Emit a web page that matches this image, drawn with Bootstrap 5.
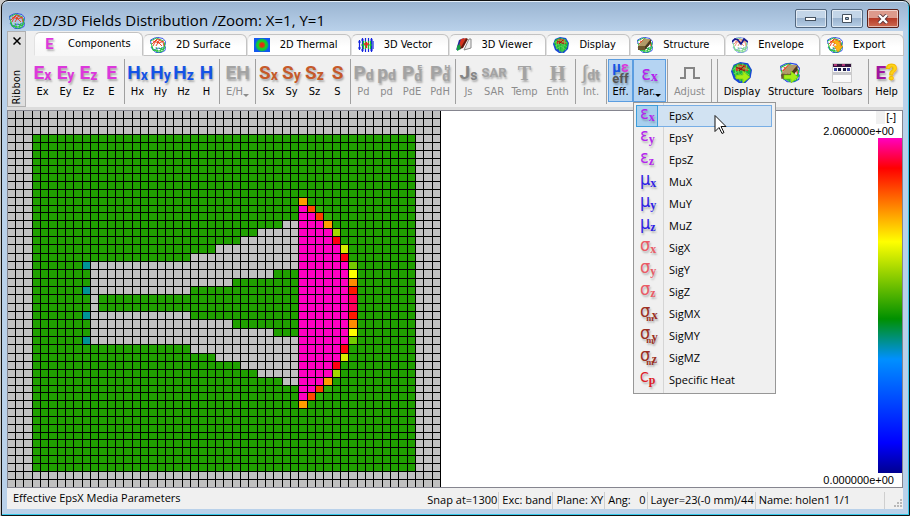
<!DOCTYPE html>
<html lang="en">
<head>
<meta charset="utf-8">
<meta name="viewport" content="width=device-width, initial-scale=1">
<title>2D/3D Fields Distribution</title>
<link rel="stylesheet" href="https://cdn.jsdelivr.net/npm/bootstrap@5.3.0/dist/css/bootstrap.min.css">
<style>
:root{--ui:"DejaVu Sans Condensed","Liberation Sans",sans-serif;--menu:"Open Sans","Noto Sans",sans-serif}
body{background:#c9c9c9;color:#000;font:11px/16px var(--ui)}
button{font:inherit;color:inherit}
.win{min-height:100vh;margin-left:1px;padding:0 6px 6px 5px;border:1px solid #111;border-radius:7px 7px 0 0;background:linear-gradient(#9ab4d1,#b9d1ea 30px);box-shadow:inset -1px -1px 0 #35c8ea,inset 0 1px 0 #e4eef8}
.titlebar{height:30px;padding:8px 4px 0 2px}
.titlebar h1{font:15px/22px var(--menu);margin:0}
.capbtn{width:32px;height:19px;padding:0;border:1px solid #52677f;border-radius:2px;box-shadow:inset 0 0 0 1px rgba(255,255,255,.55);background:linear-gradient(#c3d5e8 45%,#9ab3cf 50%,#b6cee6)}
.capbtn.closer{background:linear-gradient(#dd9a8c 45%,#b63a26 50%,#cc6a52);border-color:#5a2019}
.ribbon{background:#f0f0f0;height:76px}
.side{width:19px;background:#dfdfdf;border:1px solid #b0b0b0;padding:4px 0 1px}
.side button{border:0;background:none;padding:0;height:10px;line-height:8px}
.side span{writing-mode:vertical-rl;transform:rotate(180deg);line-height:14px}
.tabs{padding-left:8px;padding-top:1px;height:25px;flex-wrap:nowrap}
.tabs li{flex:95 1 0;min-width:0;display:flex;align-items:flex-end}
.tabs li.wide{flex-grow:104}.tabs li.mid{flex-grow:98}.tabs li.first{flex-grow:109}.tabs li.slim{flex-grow:84}
.tabs button{width:100%;height:22px;padding:0 0 0 6px;border:1px solid #c3c3c3;border-left-color:#e2e2e2;border-radius:6px 6px 0 0;background:linear-gradient(#f4f4f4,#fff 60%);display:flex;align-items:center;gap:10px;white-space:nowrap;line-height:16px}
.tabs button.active{height:24px;border-bottom-color:#f7f7f7;background:linear-gradient(#fff,#f7f7f7)}
.tabs svg{flex:none}
.tabs .lt{width:17px;font-size:15px;font-style:normal;text-align:center}
.tools{padding:3px 0 0}
.grp{height:45px;border-left:1px solid #a0a0a0;padding:0 1px}
.grp.plain{border-color:transparent;padding-left:4px}
.tool{height:43px;padding:2px 0 0;border:1px solid transparent;background:none;display:flex;flex-direction:column;align-items:center;white-space:nowrap;width:23px}
.tool i{height:22px;display:flex;align-items:center;justify-content:center;font-style:normal}
.tool:disabled{color:#8c8c8c}
.tool.w25{width:25px}.tool.w28{width:28px}.tool.w33{width:33px}.tool.w41{width:41px}.tool.w46{width:46px}.tool.w50{width:50px}.tool.w52{width:52px}
.tool.hot{background:#b5d4f2;border-color:#5b9de0}
.lt{font:bold 19px/20px "Liberation Sans Narrow","Roboto",sans-serif;text-shadow:1px 2px 2px rgba(0,0,0,.3)}
.lt small{font-size:14px;line-height:10px;margin-top:4px}
.lt .pile{display:flex;flex-direction:column;align-items:flex-end;font-size:14px;line-height:11px}
.lt .pile b{font-size:8px;line-height:7px}
.lt.serif{font-family:"Liberation Serif",serif;font-size:20px}
.lt.sar{font-size:13px}
.ce{color:#dc38dc}.ch{color:#1453e6}.cs{color:#c65a2a}.cg{color:#a3a3a3}.cd{color:#858585}
.lt.mixed{font-size:14px;line-height:11px;text-align:center}
.eff{color:#555;font-size:13px}
.help{color:#a014a0}.help b{color:#ffd21a;font-size:22px;-webkit-text-stroke:1px #f1bd00}
.tri{display:inline-block;border:3px solid transparent;border-top-color:currentColor;border-bottom:0;vertical-align:-2px}
.pop{position:absolute;left:0;top:43px;z-index:5;width:143px;margin:0;padding:2px;border:1px solid #979797;background:linear-gradient(90deg,transparent 29px,#d5d5d5 29px,#d5d5d5 30px,transparent 30px) #f0f0f0;font:11px/20px var(--menu);color:#000}
.pop button{width:136px;height:22px;padding:0;border:1px solid transparent;background:none;display:flex;align-items:center;gap:11px;text-align:left}
.pop button.on{background:#d1e2f2;border-color:#78aee5}
.pop button.on .sym{background:#a8d0ee;border-color:#3c9ddc}
.sym{width:22px;height:22px;border:1px solid transparent;margin:-1px 0 -1px -1px;font:18px/14px "DejaVu Sans Condensed",sans-serif;padding-left:3px;white-space:nowrap;text-shadow:1px 2px 2px rgba(0,0,0,.25);flex:none}
.sym small{font:bold 12px/10px "Liberation Serif",serif;position:relative;top:2px}
.sym .under{font-size:9px;margin:0 -2px 0 -4px;top:4px}
.sym.sc{font-size:14px}
.sym.big{font-size:20px;line-height:20px}
.sym.big small{font-size:14px;top:4px}
.se{color:#b423ee}.sm{color:#2f22e6}.ss{color:#ea5a66}.sx{color:#9c2f22}.sc{color:#dd1c28}
.pointer{position:absolute;left:80px;top:12px;pointer-events:none}
.strip{height:3px;background:#dcdcdc}
.view{background:#fff;border:1px solid #85858f;min-height:300px}
.mesh{flex:none;height:376px;display:block}
.legend{width:92px;font:11px/14px "Liberation Sans",sans-serif}
.unit{background:#fff;line-height:13px;padding:0 6px 0 1px}
.unitrow{width:26px;background:#f0f0f0}
.ramp{width:24px;background:linear-gradient(#ff00c0,#f00 9%,#ff0 31%,#009000 54%,#0090ff 66%,#00f 91%,#000090)}
.status{background:#f0f0f0;height:21px;padding-left:6px;font:11px/20px var(--menu);white-space:nowrap}
.cell{border-right:1px solid #cfcfcf;padding:0 1px 0 3px;text-align:right;line-height:15px;height:17px}
.cell.named{padding-right:34px}
</style>
<script src="https://cdn.jsdelivr.net/npm/bootstrap@5.3.0/dist/js/bootstrap.bundle.min.js"></script>
</head>
<body>
<svg width="0" height="0" class="position-absolute" aria-hidden="true">
<defs>
<symbol id="net" viewBox="0 0 16 16"><g fill="none" stroke-width=".9"><path stroke="#2a49e8" d="M1 7 .5 3l4-2 4-.500M8 .5l5 1 2.500 3-.500 4M1 10l2 3 3 2.500h5l4-2 .500-4M15 9l-4 3-3-1-4 2"/><path stroke="#22c13c" d="M.5 4l6-3 7 3M1 6l2 6 5 3.500M1.500 9l2 5M15 6l-2 8-4 1.500M14 5l1 6-6 3-6-1M9 11l5 2M6 10l2 5M12 10l-2 5"/><path stroke="#ea3a16" d="M2 7l5-5 6 3 1 4M3 9l3-6 6 6M3 4l6 2 5-2M6 9l4-7"/></g></symbol>
<symbol id="globe" viewBox="0 0 16 16"><path fill="#1747d6" d="M2 2 7 0l6 1 3 5-1 6-4 4H6l-4-3-2-6z"/><path fill="#17b83a" d="m2 3 4-2 6 1 3 4-1 5-4 4-3-1-4-3-2-5z"/><path fill="#e3341d" d="m3 6 2-4h5l3 3v2l-4-1-4 1z"/><path d="m1 6 5-3 8 3M2 9l6-3 6 4M3 12l5-3 5 4M5 2l2 13M9 1v15M12 2l-2 12M3 4l1 8" stroke="#6fda5b" stroke-width=".7" fill="none"/><path d="M4 4l7 3M10 3 6 7" stroke="#8c160b" fill="none" stroke-width=".8"/></symbol>
<symbol id="brick" viewBox="0 0 16 16"><use href="#net"/><path fill="#b29a68" d="M1 9 7 2h7L8 9z"/><path fill="#6d562e" d="M1 9h7v4H1z"/><path fill="#4b3a1e" d="m8 9 6-7v4l-6 7z"/></symbol>
<symbol id="arrow" viewBox="0 0 16 16"><path fill="#a6ee17" stroke="#6fc40e" stroke-width=".6" d="M1 8h7V4l7 6-7 6v-4H1z"/></symbol>
</defs></svg>

<div class="win d-flex flex-column">
<header class="titlebar d-flex align-items-start">
<svg class="mt-1 me-2 flex-shrink-0" width="16" height="16"><use href="#net"/></svg>
<h1 class="me-auto text-nowrap">2D/3D Fields Distribution /Zoom: X=1, Y=1</h1>
<div class="d-flex gap-1">
<button class="capbtn d-flex align-items-center justify-content-center" aria-label="Minimize"><svg width="12" height="6"><rect x=".5" y="1.500" width="10" height="3" fill="#fff" stroke="#44505e"/></svg></button>
<button class="capbtn d-flex align-items-center justify-content-center" aria-label="Maximize"><svg width="12" height="10"><path d="M1.500.5h9v8h-9zM4.500 3.500h3v2h-3z" fill="#fff" stroke="#44505e" fill-rule="evenodd"/></svg></button>
<button class="capbtn closer d-flex align-items-center justify-content-center" aria-label="Close"><svg width="12" height="10"><path d="m2 1 8 8m0-8L2 9" stroke="#55343a" stroke-width="4"/><path d="m2 1 8 8m0-8L2 9" stroke="#fff" stroke-width="2.400"/></svg></button>
</div>
</header>

<div class="ribbon d-flex">
<div class="side d-flex flex-column align-items-center justify-content-between flex-shrink-0">
<button aria-label="Close ribbon"><svg width="8" height="8"><path d="m.5.5 7 7m0-7-7 7" stroke="#000" stroke-width="1.500"/></svg></button><span>Ribbon</span></div>
<div class="flex-grow-1">
<ul class="tabs nav list-unstyled mb-0">
<li class="first"><button class="active"><i class="lt ce">E</i>Components</button></li>
<li class="wide"><button><svg width="16" height="16"><use href="#net"/></svg>2D Surface</button></li>
<li class="wide"><button><svg width="16" height="16"><defs><radialGradient id="th"><stop offset="0" stop-color="#f02010"/><stop offset=".3" stop-color="#d04010"/><stop offset=".55" stop-color="#10d820"/><stop offset=".8" stop-color="#10b850"/><stop offset="1" stop-color="#1058f0"/></radialGradient></defs><path fill="#1058f0" d="M0 1h16v14H0z"/><circle cx="8" cy="8" r="7" fill="url(#th)"/></svg>2D Thermal</button></li>
<li class="mid"><button><svg width="16" height="16" fill="none"><path stroke="#1324e0" stroke-width="1.200" d="M1.500 3v10M4.500 1v14M7.500 1v4M10.500 1v4M13.500 1v14M7.500 11v4M10.500 11v4M0 5h3M0 11h3M3 3h3M12 3h3M3 13h3M12 13h3M15 4v8"/><path stroke="#1dc32e" stroke-width="1.200" d="M5.500 4v8M7.500 4v8M10.500 4v8M12.500 4v8M3 8h11"/><path stroke="#f02020" stroke-width="1.500" d="M8.500 5v6M6 7h5"/></svg>3D Vector</button></li>
<li class="mid"><button><svg width="16" height="16"><path fill="#eee" stroke="#888" d="m8 13 5-11h2v9z"/><path fill="#202a9c" d="M3 3 8 1 5 11l-5 2z"/><path fill="#d6321c" d="m5 2 5-1-4 9-4 2z"/><path fill="#159a44" d="m1 9 3-2 1 5-4 2z"/><path fill="#65180e" d="m10 1 2 1-5 9-3 1z"/></svg>3D Viewer</button></li>
<li class="slim"><button><svg width="16" height="16"><use href="#globe"/></svg>Display</button></li>
<li><button><svg width="16" height="16"><use href="#brick"/></svg>Structure</button></li>
<li><button><svg width="16" height="16"><g opacity=".6"><use href="#net"/></g><path d="m0 5 3-3 3 1 3 4 3-5 4 3" fill="none" stroke="#17178c" stroke-width="1.600"/></svg>Envelope</button></li>
<li class="slim"><button><svg width="16" height="16"><use href="#net"/><path fill="#fdb515" stroke="#e58d05" stroke-width=".6" d="M5 5c5-3 8-1 8 4h3l-5 6-4-6h3c0-2-2-3-5-4z"/></svg>Export</button></li>
</ul>
<div class="tools d-flex">
<div class="grp plain d-flex"><button class="tool"><i class="lt ce">E<small>x</small></i>Ex</button><button class="tool"><i class="lt ce">E<small>y</small></i>Ey</button><button class="tool"><i class="lt ce">E<small>z</small></i>Ez</button><button class="tool"><i class="lt ce">E</i>E</button></div>
<div class="grp d-flex"><button class="tool"><i class="lt ch">H<small>x</small></i>Hx</button><button class="tool"><i class="lt ch">H<small>y</small></i>Hy</button><button class="tool"><i class="lt ch">H<small>z</small></i>Hz</button><button class="tool"><i class="lt ch">H</i>H</button></div>
<div class="grp d-flex"><button class="tool w33" disabled><i class="lt cg">EH</i><span>E/H<span class="tri"></span></span></button></div>
<div class="grp d-flex"><button class="tool"><i class="lt cs">S<small>x</small></i>Sx</button><button class="tool"><i class="lt cs">S<small>y</small></i>Sy</button><button class="tool"><i class="lt cs">S<small>z</small></i>Sz</button><button class="tool"><i class="lt cs">S</i>S</button></div>
<div class="grp d-flex"><button class="tool" disabled><i class="lt cg">P<small>d</small></i>Pd</button><button class="tool" disabled><i class="lt cg">p<small>d</small></i>pd</button><button class="tool w28" disabled><i class="lt cg">P<span class="pile"><b>E</b>d</span></i>PdE</button><button class="tool w28" disabled><i class="lt cg">P<span class="pile"><b>H</b>d</span></i>PdH</button></div>
<div class="grp d-flex"><button class="tool" disabled><i class="lt cd">J<small>s</small></i>Js</button><button class="tool w28" disabled><i class="lt sar cg">SAR</i>SAR</button><button class="tool w33" disabled><i class="lt serif cg">T</i>Temp</button><button class="tool w33" disabled><i class="lt serif cg">H</i>Enth</button></div>
<div class="grp d-flex"><button class="tool w28" disabled><i class="lt cg"><span class="fw-normal">∫</span><small>dt</small></i>Int.</button></div>
<div class="grp d-flex">
<button class="tool w25 hot"><i class="lt mixed"><span><span class="ch">μ</span><span class="ce">ε</span><br><span class="eff">eff</span></span></i>Eff.</button>
<div class="position-relative"><button class="tool w33 hot"><i class="sym se big p-0 m-0 border-0">ε<small>x</small></i><span>Par.<span class="tri"></span></span></button>
<div class="pop">
<button class="on"><span class="sym se">ε<small>x</small></span>EpsX</button>
<button><span class="sym se">ε<small>y</small></span>EpsY</button>
<button><span class="sym se">ε<small>z</small></span>EpsZ</button>
<button><span class="sym sm">μ<small>x</small></span>MuX</button>
<button><span class="sym sm">μ<small>y</small></span>MuY</button>
<button><span class="sym sm">μ<small>z</small></span>MuZ</button>
<button><span class="sym ss">σ<small>x</small></span>SigX</button>
<button><span class="sym ss">σ<small>y</small></span>SigY</button>
<button><span class="sym ss">σ<small>z</small></span>SigZ</button>
<button><span class="sym sx">σ<small class="under">m</small><small>x</small></span>SigMX</button>
<button><span class="sym sx">σ<small class="under">m</small><small>y</small></span>SigMY</button>
<button><span class="sym sx">σ<small class="under">m</small><small>z</small></span>SigMZ</button>
<button><span class="sym sc">C<small>p</small></span>Specific Heat</button>
<svg class="pointer" width="14" height="20"><path d="M1 .5v16l4-4 3 6 2-1-3-6h5z" fill="#fff" stroke="#111"/></svg>
</div></div></div>
<div class="grp d-flex"><button class="tool w41" disabled><i><svg width="20" height="14"><path d="M0 12h5V2h9v10h6" fill="none" stroke="#858585" stroke-width="2"/></svg></i>Adjust</button></div>
<div class="grp pe-1"></div>
<div class="grp d-flex"><button class="tool w46"><i><svg width="22" height="22"><use href="#globe" width="21" height="21"/><use href="#arrow" x="3" y="5" width="18" height="16"/></svg></i>Display</button><button class="tool w52"><i><svg width="22" height="22"><use href="#brick" width="20" height="21"/><use href="#arrow" x="1" y="5" width="20" height="16"/></svg></i>Structure</button><button class="tool w50"><i><svg width="20" height="20"><path fill="#fafafa" stroke="#ccc" d="M.5.5h19v19H.5z"/><path fill="#c8c8cc" d="M1 9h18v3H1z"/><path fill="#32143c" d="M1 1h18v3H1z"/><path fill="#b03a78" d="M2 1h3v2H2zM10 1h3v2h-3z"/><path fill="#3c46a0" d="M2 5h3v3H2zM15 5h3v3h-3z"/><path fill="#191940" d="M6 5h3v3H6zM11 5h3v3h-3z"/></svg></i>Toolbars</button></div>
<div class="grp d-flex"><button class="tool w33"><i class="lt help">E<b>?</b></i>Help</button></div>
</div></div></div>

<div class="strip"></div>
<main class="view d-flex flex-grow-1 justify-content-between">
<svg class="mesh" id="mesh" width="433" shape-rendering="crispEdges" role="img" aria-label="EpsX distribution in the XY plane"></svg>
<aside class="legend d-flex flex-column align-items-end">
<div class="unitrow d-flex justify-content-end"><span class="unit">[-]</span></div>
<div class="pe-2">2.060000e+00</div>
<div class="ramp flex-grow-1"></div>
<div class="pe-2">0.000000e+00</div>
</aside>
</main>
<footer class="status d-flex align-items-start">
<span class="me-auto">Effective EpsX Media Parameters</span>
<div class="d-flex pt-1">
<span class="cell">Snap at=1300</span><span class="cell">Exc: band</span><span class="cell">Plane: XY</span><span class="cell">Ang: &nbsp; 0</span><span class="cell">Layer=23(-0 mm)/44</span><span class="cell named">Name: holen1 1/1</span>
<svg class="align-self-end ms-2" width="10" height="10" fill="#b8b8b8"><path d="M7 0h2v2H7zM4 3h2v2H4zM7 3h2v2H7zM1 6h2v2H1zM4 6h2v2H4zM7 6h2v2H7z"/></svg>
</div>
</footer>
</div>
<script>
// Cell rows of the non-uniform mesh: the y coordinate of each horizontal line.
const ys=[-1,7,15,23,31,39,47,54,62,70,78,86,94,101,109,117,125,133,142,150,158,167,175,183,192,200,208,217,225,233,242,250,258,266,274,281,289,297,305,313,321,328,336,344,352,360,368,376];
const xs=Array.from({length:53},(_,n)=>Math.floor(25*n/3+1e-6)-1);
// Upper half of the lens and horn; each run is [first column, last column, colour].
const G='#c0c0c0',M='#ff00c0',T='#009494';
const half={11:[[35,35,'#ff9c00']],12:[[35,35,M],[36,36,'#ff4800'],[37,37,'#30ac08']],13:[[35,36,M],[37,37,'#ff3c00'],[38,38,'#30ac08']],
14:[[33,34,G],[35,37,M],[38,38,'#ff9c00']],15:[[30,34,G],[35,38,M],[39,39,'#a4d800']],16:[[28,34,G],[35,38,M],[39,39,'#ff0010']],
17:[[25,34,G],[35,39,M],[40,40,'#d8ec00']],18:[[22,34,G],[35,39,M],[40,40,'#ff0010']],19:[[9,9,T],[10,34,G],[35,40,M],[41,41,'#74cc00']],
20:[[10,31,G],[35,40,M],[41,41,'#ffff00']],21:[[10,26,G],[35,40,M],[41,41,'#ff8c00']],22:[[9,9,T],[10,21,G],[35,40,M],[41,41,'#ff1800']],23:[[10,10,G],[35,40,M],[41,41,'#ff0058']]};
const box=(a,b,r,s,c)=>`<rect x="${xs[a]}" y="${ys[r]}" width="${xs[b+1]-xs[a]}" height="${ys[s+1]-ys[r]}" fill="${c}"/>`;
let out=box(0,51,0,46,G)+box(3,48,3,44,'#20a000');
for(const k in half)for(const [a,b,c] of half[k]){out+=box(a,b,+k,+k,c)+box(a,b,47-k,47-k,c)}
let d='';
for(const x of xs.slice(1))d+=`M${x} 0h1v376h-1z`;
for(const y of ys.slice(1))d+=`M0 ${y}h433v1H0z`;
document.getElementById('mesh').innerHTML=out+`<path d="${d}"/>`;
</script>
</body>
</html>
